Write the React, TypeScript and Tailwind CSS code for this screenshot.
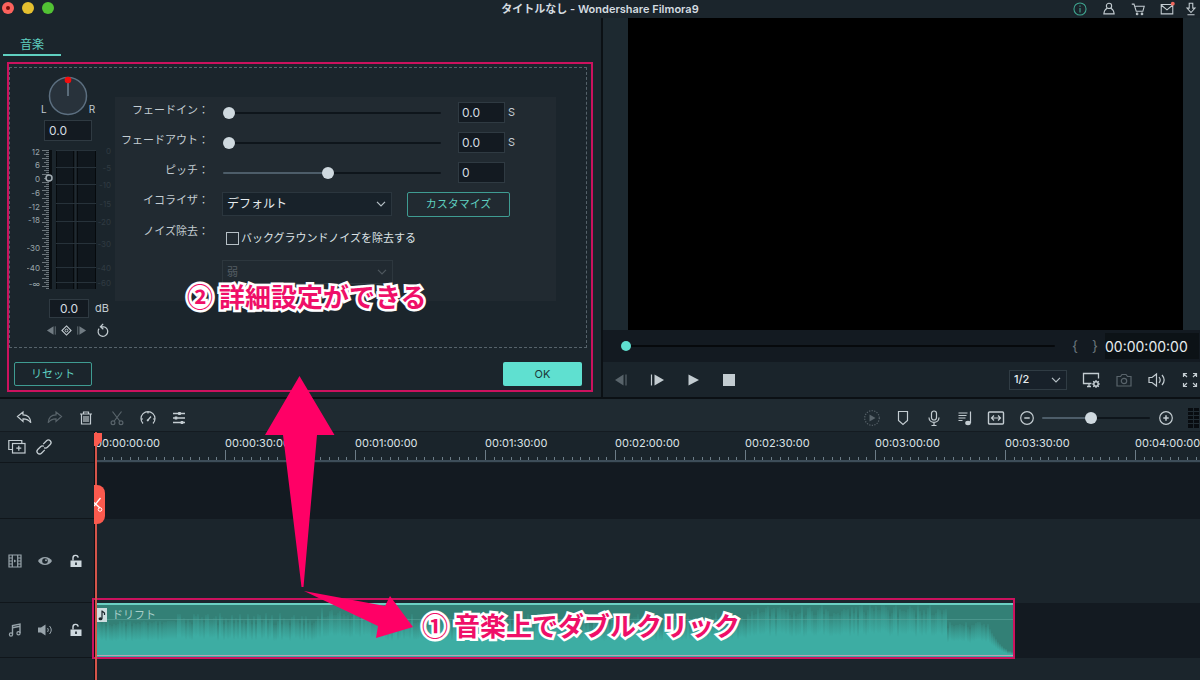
import { useState } from 'react';
import type { ReactNode } from 'react';

type IconProps = { children: ReactNode; className?: string; size?: number };

// every icon is drawn on an 18 unit grid
function Icon({ children, className = 'text-[#c3ccd1]', size = 18 }: IconProps) {
  return (
    <svg
      width={size}
      height={size}
      viewBox="0 0 18 18"
      fill="none"
      stroke="currentColor"
      strokeWidth="1.2"
      className={`shrink-0 ${className}`}
      aria-hidden="true"
    >
      {children}
    </svg>
  );
}

const DIM = 'text-[#59646b]';

const icons = {
  info: <><circle cx="9" cy="9" r="6.8" /><path d="M9 8v5M9 5v1.4" /></>,
  user: <><circle cx="9" cy="5.500" r="3" /><path d="M6.800 8.200C4.500 9.500 3.500 11.500 3.200 14.500h11.600c-.3-3-1.300-5-3.600-6.300" /></>,
  cart: <><path d="M2 3.500h2.500L7 11.500h7.500L16 6H6" /><circle cx="8" cy="14.500" r=".9" /><circle cx="13.500" cy="14.500" r=".9" /></>,
  mail: <><path d="M2.500 4h13v10.500h-13zM2.500 4.500 9 10l6.500-5.500" /><circle cx="15.500" cy="3" r="2.200" fill="#f0675c" stroke="none" /></>,
  download: <><path d="M7 2.500h4v5.500h2.500L9 13 4.500 8H7zM5 15.500h8" /></>,
  undo: <path d="M2.500 7.500 8 3v2.800c5 0 7.500 3.200 7.800 8-2-3.200-4.300-4-7.800-4v2.700z" />,
  redo: <path d="M15.500 7.500 10 3v2.800c-5 0-7.500 3.200-7.800 8 2-3.200 4.300-4 7.800-4v2.700z" />,
  trash: <><path d="M3 5h12M6.500 5V3h5v2M4.500 5.500v9.500h9V5.500M7 7v6M9 7v6M11 7v6" /></>,
  cut: <><path d="m4.500 2.500 7.200 9.500M13.500 2.500 6.300 12" /><circle cx="5" cy="13.700" r="1.900" /><circle cx="13" cy="13.700" r="1.900" /></>,
  speed: <><path d="M4 14.500a7 7 0 1 1 10 0M9 11l3-3.500M2.500 10H4M14 10h1.500M9 3v1.500" /><circle cx="8.800" cy="11.300" r="1.100" fill="currentColor" stroke="none" /></>,
  adjust: <><path d="M3 4.500h12M3 9h12M3 13.500h12" strokeWidth="1.400" /><path d="M9.500 3v3M6 7.500v3M12 12v3" strokeWidth="2.600" /></>,
  render: <><circle cx="9" cy="9" r="7.300" strokeDasharray="1.200 1.400" /><path d="m6.500 5.500 6 3.500-6 3.500z" fill="currentColor" stroke="none" /></>,
  marker: <path d="M4.500 2.500h9v9L9 15.500l-4.500-4z" />,
  mic: <><rect x="6.500" y="2" width="5" height="9" rx="2.500" /><path d="M4 8.500c0 6.500 10 6.500 10 0M9 13.500v3M6.500 16.500h5" /></>,
  music: <><path d="M2.500 4h9M2.500 6.500h8M2.500 9h7M2.500 11.500h4M14.500 2.500V14" /><ellipse cx="12" cy="14" rx="2.800" ry="2.200" fill="currentColor" stroke="none" /></>,
  fit: <><rect x="1.500" y="3" width="15" height="12" rx="1" strokeWidth="1.400" /><path d="M4.500 9h9M7 6.500 4.500 9 7 11.500M11 6.500 13.500 9 11 11.500" /></>,
  minus: <><circle cx="9" cy="9" r="6.300" /><path d="M6.300 9h5.400" strokeWidth="1.500" /></>,
  plus: <><circle cx="9" cy="9" r="6.300" /><path d="M6.300 9h5.400M9 6.300v5.400" strokeWidth="1.500" /></>,
  prevFrame: <><path d="M11.500 3.500v11L3 9z" fill="currentColor" stroke="none" /><path d="M14 3.500v11" /></>,
  nextFrame: <><path d="M6.500 3.500v11L16 9z" fill="currentColor" stroke="none" /><path d="M3.500 3.500v11" /></>,
  play: <path d="M4.500 3.500v11L15 9z" fill="currentColor" stroke="none" />,
  stop: <rect x="3" y="3" width="12" height="12" fill="currentColor" stroke="none" />,
  display: <><path d="M9.500 12.500h-8V2.500h15v5M5 15.500h4M7 12.500v3" strokeWidth="1.300" /><circle cx="14" cy="13" r="2.200" strokeWidth="1.500" /><path d="M14 9v1.800M14 15.200V17M10 13h1.800M16.200 13H18M11.200 10.200l1.200 1.200M15.600 14.600l1.200 1.200M16.800 10.200l-1.200 1.200M12.400 14.600l-1.200 1.200" /></>,
  camera: <><path d="M2 5.500h3.500L7 3.500h4l1.500 2H16V15H2z" /><circle cx="9" cy="10" r="2.700" /></>,
  volume: <><path d="M1 6.500h3L8.500 3v12L4 11.500H1zM11 6c1.600 2 1.600 4 0 6M14 4c3 3.500 3 6.500 0 10" /></>,
  expand: <path d="M2.500 6V2.500H6M12 2.500h3.500V6M15.500 12v3.500H12M6 15.500H2.500V12M2.500 2.500 6 6M15.500 2.500 12 6M15.500 15.500 12 12M2.500 15.500 6 12" />,
  addTrack: <><path d="M4.500 11.500H.8V2.500h13V5" /><rect x="4.500" y="5.500" width="12.500" height="9.500" /><path d="M10.800 7.700v5M8.300 10.200h5" /></>,
  link: <g transform="rotate(-45 9 9)"><path d="M7.500 11.600H2.800a2.600 2.600 0 0 1 0-5.200h4a2.600 2.600 0 0 1 2.500 2M10.500 6.400h4.700a2.600 2.600 0 0 1 0 5.200h-4a2.600 2.600 0 0 1-2.500-2" strokeWidth="1.300" /></g>,
  film: <><path d="M3 3h12v12H3zM6.300 3v12M11.700 3v12M3 6h3.300M3 9h3.300M3 12h3.300M11.700 6H15M11.700 9H15M11.700 12H15" /><path d="m8 7.500 2.500 1.500L8 10.500z" fill="currentColor" stroke="none" /></>,
  eye: <><path d="M2 9C5 3.600 13 3.600 16 9c-3 5.400-11 5.400-14 0z" fill="currentColor" stroke="none" /><circle cx="9" cy="9" r="2.800" fill="#1a242b" stroke="none" /><circle cx="10" cy="8.200" r="1" fill="currentColor" stroke="none" /></>,
  lock: <><rect x="3.500" y="8.500" width="11" height="6.500" fill="currentColor" stroke="none" /><path d="M6 8.500V6.300a2.600 2.600 0 0 1 5.200-.6" strokeWidth="1.400" /><path d="M9 10.500v2.500" stroke="#1a242b" strokeWidth="1.600" /></>,
  note: <><path d="M6.500 13.500V4.500L14 3v9M6.500 6.800 14 5.300" strokeWidth="1.400" /><circle cx="5" cy="13.500" r="1.600" /><circle cx="12.500" cy="12.200" r="1.600" /></>,
  speaker: <><path d="M2 6.500h3L9.500 3.500v11L5 11.500H2z" fill="currentColor" stroke="none" /><path d="M11.500 7c1 1.300 1 2.700 0 4M13.500 5c2.300 2.700 2.300 5.300 0 8" strokeWidth="1" /></>,
  prevKey: <><path d="M11.500 4v10L3.500 9z" fill="currentColor" stroke="none" /><path d="M13.500 4v10" strokeWidth="1" /></>,
  nextKey: <><path d="M6.500 4v10L14.500 9z" fill="currentColor" stroke="none" /><path d="M4.500 4v10" strokeWidth="1" /></>,
  key: <><path d="m9 3.500 5.500 5.500L9 14.500 3.500 9z" strokeWidth="1.300" /><circle cx="9" cy="9" r="1.700" /></>,
  reset: <path d="M4.800 6.800a5.800 5.800 0 1 0 5.700-2.300H7M9.800 1 6.500 4.500l3.500 3" strokeWidth="1.500" />,
};

type IconName = keyof typeof icons;

function IconButton({ name, label, dim, className = '' }: { name: IconName; label: string; dim?: boolean; className?: string }) {
  return (
    <button type="button" aria-label={label} className={`flex shrink-0 items-center justify-center ${className}`}>
      <Icon className={dim ? DIM : 'text-[#c3ccd1]'}>{icons[name]}</Icon>
    </button>
  );
}

function Range({ label, start, track = '#0e151b', fill = '#4d5d69', className = '' }: { label: string; start: number; track?: string; fill?: string; className?: string }) {
  const [value, setValue] = useState(start);
  return (
    <input
      type="range"
      aria-label={label}
      value={value}
      onChange={(e) => setValue(Number(e.target.value))}
      className={`h-[2px] appearance-none rounded-full outline-none [&::-webkit-slider-thumb]:appearance-none [&::-webkit-slider-thumb]:rounded-full ${className}`}
      style={{ background: `linear-gradient(to right, ${fill} ${value}%, ${track} ${value}%)` }}
    />
  );
}

const THUMB = '[&::-webkit-slider-thumb]:h-3 [&::-webkit-slider-thumb]:w-3 [&::-webkit-slider-thumb]:bg-[#cfd9df]';
const FIELD = 'border border-[#2f3a42] bg-[#131a21] text-[#d5dde1] outline-none';

function TitleBar() {
  return (
    <header className="grid h-[18px] grid-cols-[1fr_auto_1fr] items-center">
      <div className="flex gap-2 pl-[2px] pb-[3px]">
        <span className="flex h-3 w-3 items-center justify-center rounded-full bg-[#fc625d]">
          <span className="h-1 w-1 rounded-full bg-[#7a0c08]" />
        </span>
        <span className="h-3 w-3 rounded-full bg-[#e5c02f]" />
        <span className="h-3 w-3 rounded-full bg-[#52c234]" />
      </div>
      <h1 className="text-[11px] leading-4 font-semibold text-[#d5dce0]">タイトルなし - Wondershare Filmora9</h1>
      <div className="flex items-center justify-end gap-2 pr-px">
        <div className="flex gap-[13px]">
          <button type="button" aria-label="情報"><Icon size={16} className="text-[#3fa690]">{icons.info}</Icon></button>
          <button type="button" aria-label="アカウント"><Icon size={16}>{icons.user}</Icon></button>
          <button type="button" aria-label="ストア"><Icon size={16}>{icons.cart}</Icon></button>
          <button type="button" aria-label="メッセージ"><Icon size={16}>{icons.mail}</Icon></button>
        </div>
        <button type="button" aria-label="ダウンロード"><Icon size={16}>{icons.download}</Icon></button>
      </div>
    </header>
  );
}

const gainMarks: [string, number][] = [
  ['12', 5], ['6', 18], ['0', 32], ['-6', 46], ['-12', 60], ['-18', 73], ['-30', 101], ['-40', 121], ['-∞', 137],
];
const levelMarks: [string, number][] = [
  ['0', 4], ['-5', 21], ['-10', 38], ['-15', 57], ['-20', 75], ['-30', 97], ['-40', 121], ['-60', 136],
];

function LevelMeter() {
  return (
    <svg width="86" height="144" viewBox="0 0 86 144" className="mt-[6px] ml-[17px]" role="img" aria-label="音量メーター">
      {gainMarks.map(([text, y]) => (
        <text key={text} x="13" y={y + 3} textAnchor="end" fontSize="8" fill="#9aa5ab">{text}</text>
      ))}
      {Array.from({ length: 70 }, (_, i) => (
        <path key={i} d={`M${i % 4 === 0 ? 15 : i % 2 === 0 ? 17 : 19} ${3.5 + i * 2}H22`} stroke="#6b757b" />
      ))}
      <rect x="22" y="3" width="3" height="139" fill="#0a0f13" />
      <rect x="29" y="3" width="40" height="139" fill="#10171d" />
      <path d="M29.500 3V142M46.500 3V142M50.500 3V142M68.500 3V142" stroke="#060a0d" />
      <path d="M48.500 3V142" stroke="#202a31" strokeWidth="2" />
      {levelMarks.map(([text, y]) => (
        <g key={text}>
          <path d={`M29 ${y - 0.5}H69`} stroke="#27323a" />
          <text x="84" y={y + 3} textAnchor="end" fontSize="8" fill="#303b42">{text}</text>
        </g>
      ))}
      <circle cx="22" cy="31" r="3" fill="#1b252c" stroke="#a3adb3" strokeWidth="1.500" />
    </svg>
  );
}

function VolumeColumn() {
  return (
    <div className="flex w-[105px] shrink-0 flex-col pt-2">
      <div className="ml-[31px] flex items-end gap-px text-[10px] leading-[14px] text-[#c3ccd1]">
        <span>L</span>
        <svg width="40" height="40" viewBox="0 0 40 40" role="img" aria-label="パン">
          <circle cx="20" cy="20" r="18.500" fill="#28323b" stroke="#5c6f80" strokeWidth="1.500" />
          <path d="M20 5v15" stroke="#6d8191" strokeWidth="1.500" />
          <circle cx="20" cy="4" r="3.300" fill="#f40d0d" />
        </svg>
        <span>R</span>
      </div>
      <input aria-label="パン" defaultValue="0.0" className={`mt-1 ml-[34px] h-[21px] w-12 pl-1 text-[12px] ${FIELD}`} />
      <LevelMeter />
      <div className="mt-2 ml-[39px] flex items-center gap-[6px] text-[11px] text-[#c3ccd1]">
        <input id="gain" defaultValue="0.0" className={`h-[19px] w-10 text-center text-[12px] ${FIELD}`} />
        <label htmlFor="gain">dB</label>
      </div>
      <div className="mt-[5px] ml-[34px] flex items-center">
        <button type="button" aria-label="前のキーフレーム"><Icon size={15} className="text-[#717c83]">{icons.prevKey}</Icon></button>
        <button type="button" aria-label="キーフレーム"><Icon size={15}>{icons.key}</Icon></button>
        <button type="button" aria-label="次のキーフレーム"><Icon size={15} className="text-[#717c83]">{icons.nextKey}</Icon></button>
        <button type="button" aria-label="元に戻す" className="ml-[6px]"><Icon size={15}>{icons.reset}</Icon></button>
      </div>
    </div>
  );
}

const LABEL = 'w-[94px] shrink-0 self-start text-right text-[11px] leading-4 text-[#c3ccd1]';

function SliderRow({ id, label, start, value, unit }: { id: string; label: string; start: number; value: string; unit?: string }) {
  return (
    <div className="flex h-[21px] items-center">
      <label htmlFor={id} className={LABEL}>{label}：</label>
      <Range label={label} start={start} className={`ml-[14px] w-[218px] ${THUMB}`} />
      <input id={id} defaultValue={value} className={`ml-[17px] h-[21px] w-[47px] pl-[3px] text-[12px] ${FIELD}`} />
      {unit && <span className="ml-[3px] text-[11px] text-[#c3ccd1]">{unit}</span>}
    </div>
  );
}

function Select({ id, label, options, disabled, className }: { id: string; label?: string; options: string[]; disabled?: boolean; className: string }) {
  return (
    <div className={`relative w-fit ${disabled ? 'opacity-30' : ''}`}>
      <select id={id} aria-label={label} disabled={disabled} className={`block appearance-none ${className}`}>
        {options.map((o) => <option key={o}>{o}</option>)}
      </select>
      <svg width="10" height="6" viewBox="0 0 10 6" fill="none" stroke="#b6c0c6" strokeWidth="1.200" className="pointer-events-none absolute top-1/2 right-[6px] -mt-[3px]">
        <path d="m1 .8 4 4 4-4" />
      </svg>
    </div>
  );
}

function AudioSettings() {
  return (
    <div className="mt-[29px] mr-[30px] flex-1 self-start bg-[#212a31] pt-[5px] pb-[17px]">
      <div className="flex flex-col gap-[9px]">
        <SliderRow id="fade-in" label="フェードイン" start={0} value="0.0" unit="S" />
        <SliderRow id="fade-out" label="フェードアウト" start={0} value="0.0" unit="S" />
        <SliderRow id="pitch" label="ピッチ" start={48} value="0" />
      </div>
      <div className="mt-[9px] flex flex-col gap-[7px]">
        <div className="flex h-6 items-center">
          <label htmlFor="equalizer" className={LABEL}>イコライザ：</label>
          <div className="ml-[13px]">
            <Select id="equalizer" options={['デフォルト']} className="h-6 w-[170px] border border-[#2b363e] bg-[#18222a] pl-1 text-[12px] text-[#e6ecef]" />
          </div>
          <button type="button" className="ml-[15px] h-[25px] w-[103px] rounded-[2px] border border-[#3f9c92] text-[11px] text-[#5fd0c0]">カスタマイズ</button>
        </div>
        <div className="flex h-[30px] items-center">
          <span className={LABEL}>ノイズ除去：</span>
          <label className="ml-[17px] flex items-center gap-[2px] text-[11px] text-[#dde3e6]">
            <input type="checkbox" className="h-[13px] w-[13px] appearance-none border border-[#b6c0c6] checked:bg-[#5fd0c0]" />
            バックグラウンドノイズを除去する
          </label>
        </div>
        <div className="ml-[107px]">
          <Select id="noise-level" label="ノイズ除去レベル" disabled options={['弱']} className="h-6 w-[171px] border border-[#4a555c] pl-1 text-[11px] text-[#c3ccd1]" />
        </div>
      </div>
    </div>
  );
}

function AudioPanel() {
  return (
    <section className="border-r-2 border-[#0b1014] pb-[5px]">
      <nav className="flex h-11 items-start pt-[17px] pl-[3px]">
        <button type="button" className="h-[21px] w-[58px] border-b-2 border-[#5fd0c0] text-[12px] leading-[19px] text-[#5fd0c0]">音楽</button>
      </nav>
      <div className="relative mr-2 ml-[7px] pt-[5px] pb-[6px]">
        <div className="mr-[6px] ml-[2px] flex h-[281px] border border-dashed border-[#55626a]">
          <VolumeColumn />
          <AudioSettings />
        </div>
        <div className="mt-[14px] mr-[11px] ml-[7px] flex justify-between">
          <button type="button" className="h-6 w-[78px] rounded-[2px] border border-[#3f9c92] text-[11px] text-[#5fd0c0]">リセット</button>
          <button type="button" className="h-6 w-[79px] rounded-[2px] bg-[#5fe0d0] text-[11px] text-[#1b3a3a]">OK</button>
        </div>
        <div className="pointer-events-none absolute inset-0 border-2 border-[#cc125e]" />
      </div>
    </section>
  );
}

function PreviewPanel() {
  return (
    <section className="flex flex-col">
      <div className="flex flex-1 bg-[#1d2930] pr-[17px] pl-[25px]">
        <div className="flex-1 bg-black" />
      </div>
      <div className="flex h-8 items-center bg-[#131a21] pr-px pl-[18px]">
        <Range
          label="再生位置"
          start={0}
          track="#06090c"
          className="flex-1 [&::-webkit-slider-thumb]:h-[10px] [&::-webkit-slider-thumb]:w-[10px] [&::-webkit-slider-thumb]:bg-[#5fe0d0]"
        />
        <div className="mr-[6px] ml-4 flex gap-3 text-[#6a757c]">
          <button type="button" aria-label="イン点" className="w-2 text-[14px] leading-4">{'{'}</button>
          <button type="button" aria-label="アウト点" className="w-2 text-[14px] leading-4">{'}'}</button>
        </div>
        <output className="flex h-[26px] w-[94px] items-center bg-[#0c1216] text-[14px] text-[#e6ecef]">00:00:00:00</output>
      </div>
      <div className="flex h-[35px] items-center justify-between bg-[#1a242b] pr-px">
        <div className="flex">
          <IconButton name="prevFrame" label="前のフレーム" dim className="w-9" />
          <IconButton name="nextFrame" label="次のフレーム" className="w-9" />
          <IconButton name="play" label="再生" className="w-9" />
          <IconButton name="stop" label="停止" className="w-9" />
        </div>
        <div className="flex items-center gap-[15px]">
          <Select id="quality" label="再生品質" options={['1/2']} className="h-5 w-[58px] border border-[#303c44] bg-[#18212a] pl-1 text-[11px] font-medium text-[#e6ecef]" />
          <IconButton name="display" label="表示設定" />
          <IconButton name="camera" label="スナップショット" dim />
          <IconButton name="volume" label="音量" />
          <IconButton name="expand" label="全画面" />
        </div>
      </div>
    </section>
  );
}

function Toolbar() {
  return (
    <div className="flex h-[33px] items-center justify-between border-b border-[#141b21] bg-[#1f2a31] pt-[6px] pl-2">
      <div className="flex">
        <IconButton name="undo" label="元に戻す" className="w-[31px]" />
        <IconButton name="redo" label="やり直す" dim className="w-[31px]" />
        <IconButton name="trash" label="削除" className="w-[31px]" />
        <IconButton name="cut" label="分割" dim className="w-[31px]" />
        <IconButton name="speed" label="速度" className="w-[31px]" />
        <IconButton name="adjust" label="調整" className="w-[31px]" />
      </div>
      <div className="flex items-center">
        <IconButton name="render" label="レンダリング" dim className="w-[31px]" />
        <IconButton name="marker" label="マーカー" className="w-[31px]" />
        <IconButton name="mic" label="録音" className="w-[31px]" />
        <IconButton name="music" label="オーディオミキサー" className="w-[31px]" />
        <IconButton name="fit" label="全体表示" className="w-[31px]" />
        <IconButton name="minus" label="縮小" className="w-[31px]" />
        <Range label="ズーム" start={45} className={`w-[108px] ${THUMB}`} />
        <IconButton name="plus" label="拡大" className="w-[31px]" />
        <svg width="12" height="20" viewBox="0 0 12 20" className="ml-[7px]" aria-hidden="true">
          <rect width="5" height="20" fill="#080c10" />
          <rect x="6" width="5" height="20" fill="#080c10" />
          <path d="M0 3.500h12M0 7.500h12M0 11.500h12M0 15.500h12" stroke="#222d34" />
        </svg>
      </div>
    </div>
  );
}

const HALF_MINUTE = 130;
const rulerLabels = [
  '00:00:00:00', '00:00:30:00', '00:01:00:00', '00:01:30:00', '00:02:00:00',
  '00:02:30:00', '00:03:00:00', '00:03:30:00', '00:04:00:00',
];

function Ruler() {
  const ticks = Array.from({ length: rulerLabels.length * 15 }, (_, i) => {
    const x = 0.5 + Math.round((i * HALF_MINUTE) / 15);
    return `M${x} ${i % 15 === 0 ? 0 : 7}V11`;
  }).join('');
  return (
    <div className="flex h-[31px] flex-col overflow-hidden bg-[#1a242b] pt-[3px]">
      <div className="flex text-[11px] leading-4 text-[#dde3e6]">
        {rulerLabels.map((t, i) => (
          <span key={t} className={i < rulerLabels.length - 1 ? 'w-[130px] shrink-0' : 'shrink-0'}>{t}</span>
        ))}
      </div>
      <svg width="100%" height="12" className="-mt-px shrink-0" aria-hidden="true">
        <path d={ticks} stroke="#6c7c87" />
        <rect y="10" width="100%" height="2" fill="#3d4d59" />
      </svg>
    </div>
  );
}

// pseudo random but stable, so the wave form is the same on every render
function noise(i: number) {
  const n = Math.sin(i * 12.9898) * 43758.5453;
  return n - Math.floor(n);
}

function waveTop(x: number) {
  const n = noise(x);
  if (x > 893) return 24 + (1 - ((918 - x) / 25) ** 2) * 25;
  if (x >= 852) return 18 + n * 9;
  if (x > 650) return 2 + n * 12;
  if (x > 225 && x < 275) return 4 + n * 12;
  if (x < 80) return 17 + n * 6;
  return 10 + n * 12;
}

function AudioClip() {
  return (
    <div className="relative h-[54px] w-[918px] bg-[#338076]">
      <svg width="918" height="54" className="block" aria-hidden="true">
        <defs>
          <linearGradient id="wave" x1="0" y1="0" x2="0" y2="1">
            <stop offset="0" stopColor="#3dada3" stopOpacity="0.1" />
            <stop offset="0.25" stopColor="#3dada3" stopOpacity="0.6" />
            <stop offset="0.5" stopColor="#3dada3" />
          </linearGradient>
        </defs>
        {Array.from({ length: 459 }, (_, i) => {
          const y = Math.round(waveTop(i * 2));
          return <rect key={i} x={i * 2} y={y} width="2" height={54 - y} fill="url(#wave)" />;
        })}
        <path d="M0 16.500H918" stroke="#62aaa0" opacity=".5" />
        <rect width="918" height="2" fill="#6bd0c3" />
        <rect y="52" width="918" height="1" fill="#b9a3b4" />
      </svg>
      <div className="absolute top-1 left-px flex items-center gap-[5px] text-[11px] leading-4 text-[#a9cfc9]">
        <svg width="11" height="14" viewBox="0 0 11 14" aria-hidden="true">
          <rect width="11" height="14" fill="#cfdde0" />
          <path d="M6 2.500v8M6 3l2.500 2v2" stroke="#1b252c" strokeWidth="1.200" fill="none" />
          <ellipse cx="4.500" cy="10.700" rx="2" ry="1.500" fill="#1b252c" />
        </svg>
        <span>ドリフト</span>
      </div>
      <div className="absolute -top-[5px] -right-[2px] -bottom-[2px] -left-[3px] border-2 border-[#cc125e]" />
    </div>
  );
}

function TrackHeader({ kind, toggle }: { kind: IconName; toggle: IconName }) {
  return (
    <div className="flex h-full items-center">
      <span className="flex w-[29px] justify-center"><Icon className="text-[#98a4ab]">{icons[kind]}</Icon></span>
      <button type="button" aria-label="表示切替" className="flex w-[31px] justify-center"><Icon className="text-[#98a4ab]">{icons[toggle]}</Icon></button>
      <button type="button" aria-label="ロック" className="flex w-[31px] justify-center"><Icon className="text-[#cfd9df]">{icons.lock}</Icon></button>
    </div>
  );
}

function Playhead() {
  return (
    <div className="pointer-events-none absolute inset-y-0 -left-px w-3">
      <div className="absolute inset-y-0 left-px w-[2px] bg-[#d4544a]" />
      <svg width="9" height="14" viewBox="0 0 9 14" className="absolute top-px left-0">
        <path d="M0 0h8v8l-5 5H0z" fill="#fb5a4e" />
      </svg>
      <svg width="12" height="39" viewBox="0 0 12 39" className="absolute top-[53px] left-0">
        <path d="M0 0h3a8 8 0 0 1 8 8v23a8 8 0 0 1-8 8H0z" fill="#fb5a4e" />
        <path d="M0 17.500 6 23M0 21l6.500-8" stroke="#fff" strokeWidth="1.300" />
        <circle cx="6" cy="24.500" r="1.800" fill="none" stroke="#fff" />
      </svg>
    </div>
  );
}

function Timeline() {
  return (
    <div className="flex flex-1">
      <div className="flex w-[95px] shrink-0 flex-col border-r border-[#0b1014]">
        <div className="flex h-[31px] items-center gap-[9px] border-b border-[#10161b] pl-2">
          <button type="button" aria-label="トラックを追加"><Icon>{icons.addTrack}</Icon></button>
          <button type="button" aria-label="リンク"><Icon>{icons.link}</Icon></button>
        </div>
        <div className="h-14 border-b border-[#10161b]" />
        <div className="h-[84px] border-b border-[#10161b]"><TrackHeader kind="film" toggle="eye" /></div>
        <div className="h-[55px] border-b border-[#10161b]"><TrackHeader kind="note" toggle="speaker" /></div>
      </div>
      <div className="relative min-w-0 flex-1">
        <Ruler />
        <div className="h-14 bg-[#131a21]" />
        <div className="h-[84px]" />
        <div className="h-[55px] bg-[#131a21]"><AudioClip /></div>
        <Playhead />
      </div>
    </div>
  );
}

const CAPTION =
  "absolute font-['Noto_Sans_CJK_JP',sans-serif] text-[26px] leading-9 font-bold whitespace-nowrap text-[#ef0f68] [-webkit-text-stroke:5px_white] [paint-order:stroke_fill] [text-shadow:0_0_3px_white]";

function Annotations() {
  return (
    <div className="pointer-events-none absolute inset-0 overflow-hidden">
      <svg width="420" height="640" className="absolute top-0 left-0" fill="#ff0066" aria-hidden="true">
        <path d="M299.500 376 334.500 435H317L303.500 587H301.500L283 435H265z" />
        <path d="M304 591 385 606 390 596 413 627 376 638 378 626z" />
      </svg>
      <p className={`top-[278px] left-[187px] ${CAPTION}`}>② 詳細設定ができる</p>
      <p className={`top-[607px] left-[422px] ${CAPTION}`}>① 音楽上でダブルクリック</p>
    </div>
  );
}

export default function App() {
  return (
    <div className="relative flex min-h-screen flex-col overflow-hidden bg-[#1b252c] font-[Inter,'Noto_Sans_CJK_JP',sans-serif]">
      <TitleBar />
      <main className="grid grid-cols-[101fr_100fr] border-b-2 border-[#0b1014]">
        <AudioPanel />
        <PreviewPanel />
      </main>
      <Toolbar />
      <Timeline />
      <Annotations />
    </div>
  );
}
